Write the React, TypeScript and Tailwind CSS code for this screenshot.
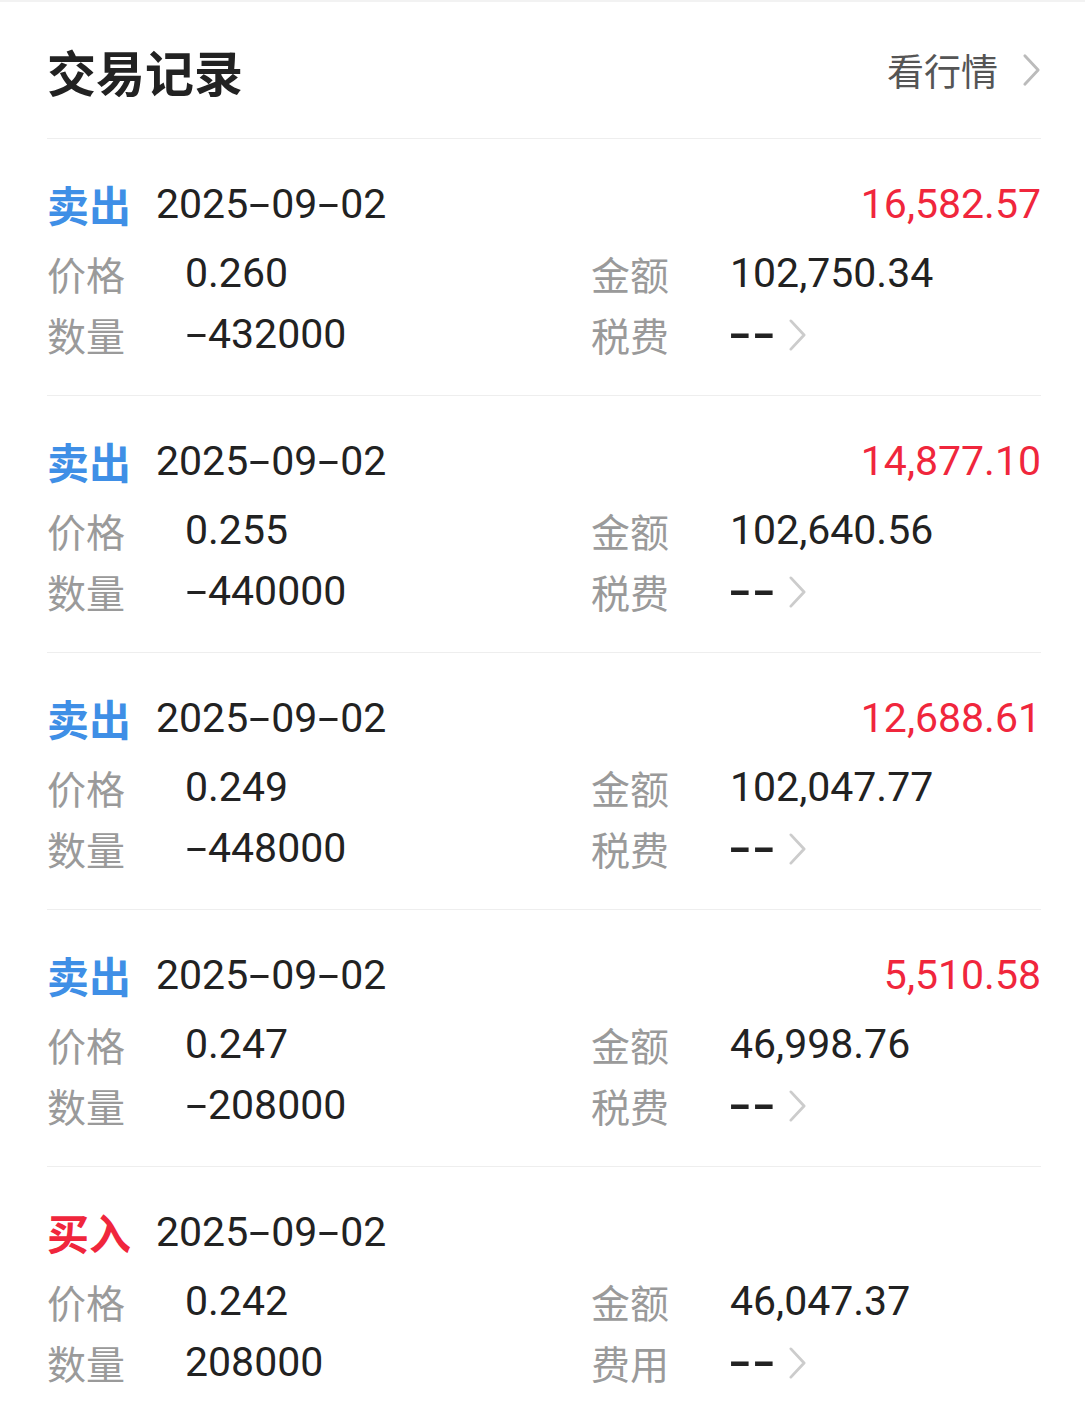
import React from "react";

type Rec = {
  side: "卖出" | "买入";
  date: string;
  profit?: string;
  price: string;
  qty: string;
  amount: string;
  feeLabel: string;
};

const records: Rec[] = [
  { side: "卖出", date: "2025-09-02", profit: "16,582.57", price: "0.260", qty: "-432000", amount: "102,750.34", feeLabel: "税费" },
  { side: "卖出", date: "2025-09-02", profit: "14,877.10", price: "0.255", qty: "-440000", amount: "102,640.56", feeLabel: "税费" },
  { side: "卖出", date: "2025-09-02", profit: "12,688.61", price: "0.249", qty: "-448000", amount: "102,047.77", feeLabel: "税费" },
  { side: "卖出", date: "2025-09-02", profit: "5,510.58", price: "0.247", qty: "-208000", amount: "46,998.76", feeLabel: "税费" },
  { side: "买入", date: "2025-09-02", price: "0.242", qty: "208000", amount: "46,047.37", feeLabel: "费用" },
];

const cjk = "font-['Noto_Sans_CJK_SC','Noto_Sans',sans-serif]";
const num = "font-['Roboto','Noto_Sans_CJK_SC',sans-serif]";

function Chevron({ className }: { className?: string }) {
  return (
    <svg viewBox="0 0 20 34" className={className} fill="none">
      <path d="M3 2 L17 17 L3 32" stroke="currentColor" strokeWidth="3" strokeLinecap="round" strokeLinejoin="round" />
    </svg>
  );
}

// Renders hyphens as wide dashes like the DIN-style font in the original
function Num({ text, className }: { text: string; className?: string }) {
  const parts = text.split(/(-)/);
  return (
    <span className={`${num} text-[41px] leading-none ${className ?? ""}`}>
      {parts.map((p, i) =>
        p === "-" ? (
          <span key={i} className="inline-block w-[23px] text-center scale-x-[1.85]">-</span>
        ) : (
          <React.Fragment key={i}>{p}</React.Fragment>
        )
      )}
    </span>
  );
}

function Dashes() {
  return (
    <span className={`${num} flex items-center gap-[4px] text-[41px] font-bold leading-none text-[#222222]`}>
      <span className="inline-block w-[20px] text-center scale-x-[1.55]">-</span>
      <span className="inline-block w-[20px] text-center scale-x-[1.55]">-</span>
    </span>
  );
}

function Card({ r, last }: { r: Rec; last: boolean }) {
  const sell = r.side === "卖出";
  return (
    <div className={`pt-[41px] ${last ? "pb-[18px]" : "pb-[30px] border-b border-[#eeeeee]"}`}>
      <div className="flex h-[48px] items-center justify-between">
        <div className="flex items-center">
          <span className={`${cjk} text-[42px] font-bold leading-none ${sell ? "text-[#3f8fe6]" : "text-[#f0263c]"}`}>{r.side}</span>
          <Num text={r.date} className="ml-[25px] text-[#222222]" />
        </div>
        {r.profit && <Num text={r.profit} className="text-[#f0263c]" />}
      </div>
      <div className="mt-[15px] grid grid-cols-[544px_1fr]">
        <div className="flex h-[61px] items-center">
          <span className={`${cjk} w-[138px] text-[39px] leading-none text-[#9a9a9a]`}>价格</span>
          <Num text={r.price} className="text-[#222222]" />
        </div>
        <div className="flex h-[61px] items-center">
          <span className={`${cjk} w-[139px] text-[39px] leading-none text-[#9a9a9a]`}>金额</span>
          <Num text={r.amount} className="text-[#222222]" />
        </div>
        <div className="flex h-[61px] items-center">
          <span className={`${cjk} w-[138px] text-[39px] leading-none text-[#9a9a9a]`}>数量</span>
          <Num text={r.qty} className="text-[#222222]" />
        </div>
        <div className="flex h-[61px] items-center">
          <span className={`${cjk} w-[139px] text-[39px] leading-none text-[#9a9a9a]`}>{r.feeLabel}</span>
          <Dashes />
          <Chevron className="ml-[14px] h-[32px] w-[19px] text-[#cccccc]" />
        </div>
      </div>
    </div>
  );
}

export default function App() {
  return (
    <div className="w-[1085px] min-h-[1410px] bg-white">
      <div className="h-[2px] bg-[#f2f2f2]" />
      <div className="pl-[47px] pr-[44px]">
        <div className="flex h-[137px] items-center justify-between border-b border-[#eeeeee]">
          <span className={`${cjk} text-[49px] font-bold leading-none text-[#222222]`}>交易记录</span>
          <div className="flex items-center">
            <span className={`${cjk} text-[37px] leading-none text-[#555555]`}>看行情</span>
            <Chevron className="ml-[24px] h-[34px] w-[19px] text-[#bbbbbb]" />
          </div>
        </div>
        {records.map((r, i) => (
          <Card key={i} r={r} last={i === records.length - 1} />
        ))}
      </div>
    </div>
  );
}
